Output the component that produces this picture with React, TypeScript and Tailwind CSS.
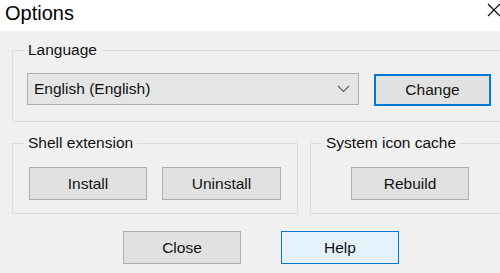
import React from "react";

const font = { fontFamily: '"Liberation Sans", Arial, sans-serif' };

function Btn({ children, variant = "normal", className = "" }: { children: React.ReactNode; variant?: "normal" | "focus" | "default"; className?: string }) {
  const v =
    variant === "focus"
      ? "border-2 border-[#0078d7] bg-[#e1e1e1]"
      : variant === "default"
      ? "border border-[#0078d7] bg-[#e5f1fb]"
      : "border border-[#adadad] bg-[#e1e1e1]";
  return (
    <button className={`shrink-0 flex items-center justify-center text-[15.5px] text-[#111] leading-none ${v} ${className}`}>
      {children}
    </button>
  );
}

function Group({ label, className = "", children }: { label: string; className?: string; children: React.ReactNode }) {
  return (
    <fieldset className={`shrink-0 border border-[#dcdcdc] min-w-0 ${className}`}>
      <legend className="ml-[11px] px-[4px] text-[15.5px] leading-[18px] text-[#111]">{label}</legend>
      {children}
    </fieldset>
  );
}

export default function App() {
  return (
    <div className="w-[500px] h-[273px] overflow-hidden bg-[#f0f0f0] flex flex-col" style={font}>
      <div className="h-[31px] bg-white flex items-center justify-between shrink-0">
        <span className="ml-[5px] text-[20px] leading-none text-black -mt-[5px]">Options</span>
        <svg width="14" height="14" viewBox="0 0 14 14" className="mr-[-1px] mt-[-11px]">
          <path d="M1 1 L13 13 M13 1 L1 13" stroke="#000" strokeWidth="1.1" fill="none" />
        </svg>
      </div>
      <div className="w-[640px] pl-[12px] pt-[10px] flex flex-col">
        <Group label="Language" className="w-[520px] h-[81px]">
          <div className="flex items-start pl-[14px] pt-[14px]">
            <div className="shrink-0 w-[332px] h-[32px] border border-[#adadad] bg-[#e5e5e5] flex items-center justify-between pl-[6px] pr-[8px]">
              <span className="text-[15.5px] text-[#111]">English (English)</span>
              <svg width="13" height="8" viewBox="0 0 13 8">
                <path d="M1 1 L6.5 6.5 L12 1" stroke="#606060" strokeWidth="1.2" fill="none" />
              </svg>
            </div>
            <Btn variant="focus" className="ml-[15px] mt-[1px] w-[117px] h-[32px]">Change</Btn>
          </div>
        </Group>
        <div className="flex mt-[12px]">
          <Group label="Shell extension" className="w-[286px] h-[80px]">
            <div className="flex pl-[16px] pt-[15px] gap-[15px]">
              <Btn className="w-[118px] h-[33px]">Install</Btn>
              <Btn className="w-[119px] h-[33px]">Uninstall</Btn>
            </div>
          </Group>
          <Group label="System icon cache" className="ml-[12px] w-[220px] h-[80px]">
            <div className="flex pl-[40px] pt-[15px]">
              <Btn className="w-[118px] h-[33px]">Rebuild</Btn>
            </div>
          </Group>
        </div>
        <div className="flex mt-[17px] pl-[111px] gap-[40px]">
          <Btn className="w-[118px] h-[33px]">Close</Btn>
          <Btn variant="default" className="w-[118px] h-[33px]">Help</Btn>
        </div>
      </div>
    </div>
  );
}
